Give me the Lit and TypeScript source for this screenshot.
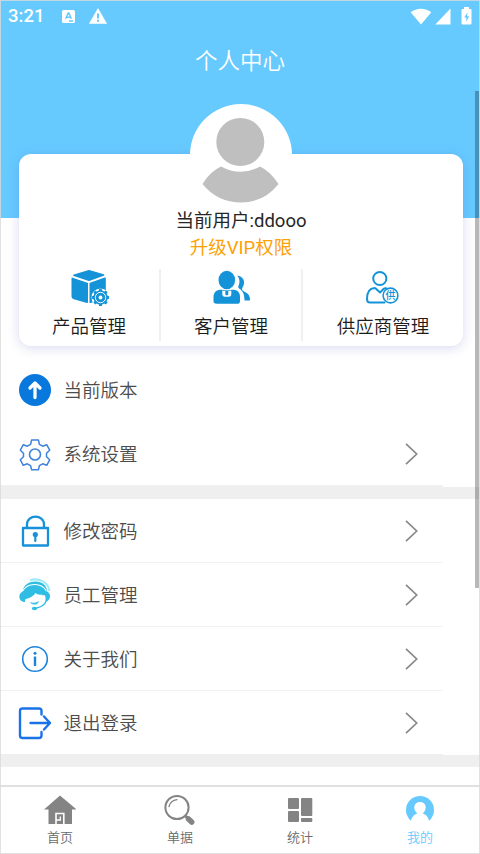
import { LitElement, html, svg, css } from "lit";
import { customElement } from "lit/decorators.js";
import { classMap } from "lit/directives/class-map.js";

const statusIcons = {
  keyboard: html`<svg width="13" height="15" viewBox="0 0 13 15"><rect y="1" width="13" height="13" rx="1.5" fill="#fff"/><path d="M3.600 9.800 6.300 4h.6l2.400 5.800M4.600 8.200h4M7 12h4" fill="none" stroke="#66caff" stroke-width="1.500"/></svg>`,
  warning: html`<svg width="18" height="16" viewBox="0 0 18 16"><path d="M9 .6 17.600 15.600H.4Z" fill="#fff" stroke="#fff" stroke-width=".6" stroke-linejoin="round"/><path d="M9 5.400v5M9 11.800v2" stroke="#66caff" stroke-width="2"/></svg>`,
  wifi: html`<svg width="22" height="17" viewBox="0 0 22 17"><path d="M.7 4.200C6.500-.5 15.500-.5 21.300 4.200L11 16.500Z" fill="#fff"/></svg>`,
  signal: html`<svg width="16" height="17" viewBox="0 0 16 17"><path d="M15.500.5V16.500H.3Z" fill="#fff"/></svg>`,
  battery: html`<svg width="11" height="18" viewBox="0 0 11 18"><path d="M3 0h5v2h1.500q1 0 1 1v13.500q0 1-1 1h-8q-1 0-1-1V3q0-1 1-1H3Z" fill="#fff"/><path d="M6.600 5.200 3.200 10.600h2.100v4.200L8.100 9.300H6Z" fill="#66caff"/></svg>`,
};

const gearPath = (cx: number, cy: number, teeth: number, outer: number, inner: number) => {
  const points: string[] = [];
  const step = (Math.PI * 2) / teeth;
  for (let i = 0; i < teeth; i++) {
    const a = i * step - Math.PI / 2;
    for (const [f, r] of [[-0.29, inner], [-0.19, outer], [0.19, outer], [0.29, inner]]) {
      points.push(`${(cx + r * Math.cos(a + f * step)).toFixed(2)} ${(cy + r * Math.sin(a + f * step)).toFixed(2)}`);
    }
  }
  return `M${points.join("L")}Z`;
};

const shortcuts = [
  {
    label: "产品管理",
    icon: svg`<g fill="#1593d8" stroke="#1593d8" stroke-width="1.600" stroke-linejoin="round">
      <path d="M3 5.300 18 .8 32.500 5 18 10.200Z"/><path d="M1.300 8.400 16.200 13.400v18.800L3 28.500Q1.300 28 1.300 26.500Z"/><path d="M19.300 13.400 34 8.300V27L19.300 32.200Z"/></g>
      <circle cx="29.500" cy="27.500" r="9.100" fill="#fff"/>
      <path d=${gearPath(29.5, 27.5, 8, 8.8, 7.2)} fill="#1593d8"/>
      <circle cx="29.500" cy="27.500" r="5.200" fill="none" stroke="#fff" stroke-width="1"/><circle cx="29.500" cy="27.500" r="1.900" fill="#fff"/>`,
  },
  {
    label: "客户管理",
    icon: svg`<path d="M24.300 5.500C30.500 6.500 33 12 29.500 17.500 28.500 19.500 29 20.500 31.500 21.800 35.500 23.800 37 25.500 37 30.500H31.500C31.500 24 29.500 20.500 26 18.500 25 17.500 25 16.500 26 14.500 27 11.500 26.500 8.500 24.300 5.500Z" fill="#1593d8"/>
      <path d="M.5 31V27c0-4.800 3-7.300 7.500-7.300h11.500c5 0 7.500 2.500 7.500 7.300v4c0 2-1 2.800-3 2.800H3.500q-3 0-3-2.800Z" fill="#1593d8"/>
      <ellipse cx="13.800" cy="10" rx="9.800" ry="10.700" fill="#fff"/><ellipse cx="13.800" cy="10" rx="8.300" ry="9.300" fill="#1593d8"/>
      <path d="M9.300 20.500q4.500 1.500 9 0V24q0 2.800-2.500 2.800h-4q-2.500 0-2.500-2.800Z" fill="#fff"/><rect x="12.300" y="20.500" width="3" height="4.800" rx="1" fill="#1593d8"/>`,
  },
  {
    label: "供应商管理",
    icon: svg`<g fill="none" stroke="#1593d8" stroke-width="2" stroke-linecap="round" stroke-linejoin="round">
      <circle cx="14.800" cy="8.500" r="6.600"/><path d="M19.500 32.500H5q-3 0-3-3.500C2 21.500 5 18.300 9.500 18q1.300 0 2 1.200L15 22.500l3.500-3.500q1-1 2.500-.8"/>
      <circle cx="25.500" cy="25.500" r="7.400" fill="#fff" stroke-width="1.600"/></g><text x="25.500" y="29.200" class="glyph">供</text>`,
  },
];

const rows = {
  version: svg`<circle cx="17" cy="17" r="16" fill="#0878dc"/><path d="M17 24.500V10.500M12 15 17 10l5 5" fill="none" stroke="#fff" stroke-width="3.300" stroke-linecap="round" stroke-linejoin="round"/>`,
  settings: svg`<path d="M13.600 3h6.800l1 4.300 3.300 1.900 4-1.500 3 5.500-3.200 3v3.600l3.200 3-3 5.500-4-1.500-3.300 1.900-1 4h-6.800l-1-4-3.300-1.900-4 1.500-3-5.500 3.200-3v-3.600l-3.200-3 3-5.500 4 1.500 3.300-1.900Z" fill="none" stroke="#3f83dc" stroke-width="1.500" stroke-linejoin="round"/><circle cx="17" cy="17.500" r="5.500" fill="none" stroke="#3f83dc" stroke-width="1.600"/>`,
  lock: svg`<g fill="none" stroke="#1791da" stroke-width="2.300" stroke-linejoin="round"><rect x="5" y="14" width="25" height="17.500"/><path d="M9 14v-3.500c0-10.500 17-10.500 17 0V14"/></g><circle cx="17.300" cy="20.500" r="2.600" fill="#1791da"/><path d="M17.300 21v6" stroke="#1791da" stroke-width="2.200" stroke-linecap="round"/>`,
  staff: svg`<path d="M12 2.200C21-.5 30 4 31.500 13" fill="none" stroke="#9eeaf8" stroke-width="2"/>
    <path d="M5 18C3 8 10 3.500 17.500 3.500S31 8 29 20.500L26.500 17 8 22Z" fill="#2fbde3"/>
    <path d="M4.500 13.500C9 4.500 24 4 28.500 13.500" fill="none" stroke="#fff" stroke-width="1.100"/>
    <path d="M7 13v11C-.5 24-.5 13.500 7 13ZM27.500 13v11C33.500 22.500 33.500 14 27.500 13Z" fill="#2fbde3"/>
    <path d="M8 21q6.500-1.500 9.500-6 2 2.200 6.500 1.500 3 5 1.500 9-3 4.500-8.500 4.500-7 0-9-9Z" fill="#fff"/>
    <path d="M11.500 24q5 2 9.500-1-1 3.800-4.500 3.800-3 0-5-2.800Z" fill="#45c4e6"/>
    <path d="M28.500 22.500q-2.500 6-10 7.500" fill="none" stroke="#2fbde3" stroke-width="1.300"/><ellipse cx="16.500" cy="30.500" rx="2.700" ry="1.700" fill="#2fbde3"/>`,
  info: svg`<circle cx="17" cy="17" r="12.300" fill="none" stroke="#1c84dc" stroke-width="1.600"/><circle cx="17" cy="11.300" r="1.500" fill="#1c84dc"/><path d="M17 14.500V24" stroke="#1c84dc" stroke-width="2.400"/>`,
  logout: svg`<g fill="none" stroke="#1b73e8" stroke-width="2.400" stroke-linecap="round" stroke-linejoin="round"><path d="M23.500 8.500V5q0-2.500-2.500-2.500H4.500Q2 2.500 2 5v24.500Q2 32 4.500 32H21q2.500 0 2.500-2.500V26"/><path d="M12.500 17H32M26 10.500 32 17l-6 6.500"/></g>`,
};

const groups = [
  [
    { label: "当前版本", icon: rows.version, arrow: false },
    { label: "系统设置", icon: rows.settings, arrow: true },
  ],
  [
    { label: "修改密码", icon: rows.lock, arrow: true },
    { label: "员工管理", icon: rows.staff, arrow: true },
    { label: "关于我们", icon: rows.info, arrow: true },
    { label: "退出登录", icon: rows.logout, arrow: true },
  ],
];

const tabs = [
  { label: "首页", icon: svg`<path d="M16 1.500 32.500 15.500H28V30H4.500V15.500H0Z" fill="#848484"/><path d="M12 30V19.500H19.800V30" fill="none" stroke="#fff" stroke-width="1.600"/><path d="M12 26H16.300V22.500" fill="none" stroke="#fff" stroke-width="1.300"/>` },
  { label: "单据", icon: svg`<circle cx="13" cy="13.500" r="11.600" fill="none" stroke="#848484" stroke-width="2"/><path d="M5 12.500Q6.500 6.500 13 5.700" fill="none" stroke="#848484" stroke-width="1.300" stroke-linecap="round"/><path d="m21 21.500 3 3" stroke="#848484" stroke-width="3"/><path d="m24.500 25 3.200 3" stroke="#848484" stroke-width="5.500" stroke-linecap="round"/>` },
  { label: "统计", icon: svg`<g fill="#848484"><rect x="4" y="4" width="11" height="11" rx="1"/><rect x="4" y="17" width="11" height="11" rx="1"/><rect x="17" y="4" width="11.300" height="18" rx="1"/><rect x="17" y="24" width="11.300" height="4" rx="1"/></g>` },
  { label: "我的", active: true, icon: svg`<circle cx="16" cy="16" r="14" fill="#66caff"/><path d="M6 31C7.500 22.500 9.500 21 13.300 19.500 8.500 15.500 9.500 8 16 8s7.500 7.500 2.700 11.500C22.500 21 24.500 22.500 26 31Z" fill="#fff"/>` },
];

@customElement("app-root")
export class AppRoot extends LitElement {
  static styles = css`
    :host { display: block; width: 480px; height: 854px; font-family: Roboto, "Noto Sans CJK SC", sans-serif; }
    * { box-sizing: border-box; }
    svg { display: block; flex: none; }
    .screen { position: relative; height: 854px; overflow: hidden; display: flex; flex-direction: column; background: #fff; }
    .edge { position: absolute; inset: 0; border: 1px solid rgba(218, 218, 218, .8); pointer-events: none; }
    .hero { height: 218px; flex: none; background: #66caff; }
    .status { display: flex; align-items: center; height: 32px; padding: 0 8px; color: #fff; font-size: 18.5px; }
    .time { width: 54px; line-height: 32px; font-weight: 500; }
    .status .left { display: flex; align-items: center; gap: 14px; flex: 1; }
    .status .right { display: flex; align-items: center; gap: 3px; }
    .right svg:last-child { margin-left: 7px; }
    .title { height: 58px; line-height: 58px; text-align: center; color: #fff; font-size: 22.5px; font-weight: 350; }
    .card { position: relative; flex: none; width: 444px; height: 192px; margin: -64px 0 12px 19px; border-radius: 12px; background: #fff; box-shadow: 0 2px 12px rgba(80, 80, 190, .22); display: flex; flex-direction: column; }
    .avatar { position: absolute; left: 171px; top: -50px; }
    .user { margin-top: 54px; line-height: 27px; font-size: 18.5px; text-align: center; color: #262626; }
    .vip { line-height: 27px; font-size: 18.5px; text-align: center; color: #fda205; }
    .shortcuts { display: grid; grid-template-columns: 142px 142px 160px; height: 70px; margin-top: 7px; }
    .shortcut { display: flex; flex-direction: column; align-items: center; padding-top: 1px; border-right: 2px solid #f0f0f2; color: #1c1c1c; font-size: 18.5px; font-weight: 350; line-height: 28px; }
    .shortcut svg { margin: 0 0 7px 1px; }
    .shortcut:last-child { border: 0; }
    .glyph { font-size: 10px; font-weight: 500; text-anchor: middle; fill: #1593d8; }
    .band { flex: none; height: 13px; background: #efefef; }
    .band::after { content: ""; display: block; width: 37px; height: 1px; margin-left: auto; background: #fff; }
    .row { display: flex; align-items: center; height: 64px; width: 443px; padding: 0 25px 0 18px; border-bottom: 1px solid #f1f1f1; font-size: 18.5px; font-weight: 350; color: #4c4c4c; }
    .row.plain { border-color: transparent; }
    .row span { flex: 1; margin: 0 0 1px 11.5px; }
    .scroll { position: absolute; right: 1px; top: 91px; width: 4px; height: 497px; background: rgba(0, 0, 0, .28); }
    .tabs { margin-top: auto; flex: none; display: grid; grid-template-columns: repeat(4, 1fr); height: 69px; border-top: 2px solid #e0e0e0; background: #fff; }
    .tab { display: flex; flex-direction: column; align-items: center; padding-top: 7px; font-size: 13px; font-weight: 350; line-height: 24px; color: #6a6a6a; }
    .tab.active { color: #66caff; }
    .group:not(.first) .row:last-child { height: 63px; border: 0; }
  `;

  render() {
    return html`<div class="screen">
      <header class="hero">
        <div class="status">
          <div class="time">3:21</div>
          <div class="left">${statusIcons.keyboard}${statusIcons.warning}</div>
          <div class="right">${statusIcons.wifi}${statusIcons.signal}${statusIcons.battery}</div>
        </div>
        <div class="title">个人中心</div>
      </header>
      <section class="card">
        <svg class="avatar" width="102" height="102" viewBox="0 0 102 102"><circle cx="51" cy="51" r="51" fill="#fff"/><circle cx="50.300" cy="38" r="24" fill="#bfbfbf"/><path d="M12.500 80Q20 67.500 31 62.500 50.500 73 70 62.500 80 67 88.500 80 74 98.500 51 98.500 27.500 98.500 12.500 80Z" fill="#bfbfbf"/></svg>
        <div class="user">当前用户:ddooo</div>
        <div class="vip">升级VIP权限</div>
        <div class="shortcuts">${shortcuts.map((s) => html`<div class="shortcut"><svg width="38" height="36" viewBox="0 0 38 36">${s.icon}</svg>${s.label}</div>`)}</div>
      </section>
      ${groups.map((g, i) => html`<div class=${classMap({ group: true, first: i === 0 })}>${g.map((r) => html`<div class=${classMap({ row: true, plain: !r.arrow })}><svg width="34" height="34" viewBox="0 0 34 34">${r.icon}</svg><span>${r.label}</span>${r.arrow
        ? html`<svg width="13" height="22" viewBox="0 0 13 22"><path d="M1 .8 11.700 11 1 21.200" fill="none" stroke="#888" stroke-width="1.700"/></svg>`
        : ""}</div>`)}</div><div class="band"></div>`)}
      <nav class="tabs">${tabs.map((t) => html`<div class=${classMap({ tab: true, active: !!t.active })}><svg width="32" height="32" viewBox="0 0 32 32">${t.icon}</svg>${t.label}</div>`)}</nav>
      <div class="scroll"></div>
      <div class="edge"></div>
    </div>`;
  }
}
